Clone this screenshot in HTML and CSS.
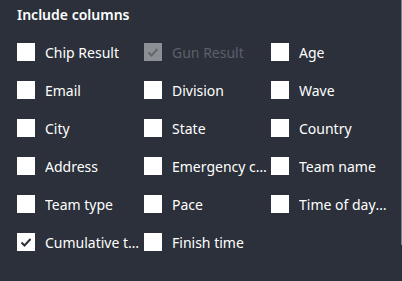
FILE: index.html
```html
<!DOCTYPE html>
<html lang="en">
<head>
    <meta charset="UTF-8">
    <title>Include columns</title>
    <link rel="stylesheet" href="styles.css">
</head>
<body>
    <div class="panel">
        <h2>Include columns</h2>
        <div class="columns">
            <label class="option"><span class="box"></span><span class="name">Chip Result</span></label>
            <label class="option disabled"><span class="box"><svg viewBox="0 0 18 18"><path d="M4.5 9.5 L7.5 12.5 L13.5 6"/></svg></span><span class="name">Gun Result</span></label>
            <label class="option"><span class="box"></span><span class="name">Age</span></label>

            <label class="option"><span class="box"></span><span class="name">Email</span></label>
            <label class="option"><span class="box"></span><span class="name">Division</span></label>
            <label class="option"><span class="box"></span><span class="name">Wave</span></label>

            <label class="option"><span class="box"></span><span class="name">City</span></label>
            <label class="option"><span class="box"></span><span class="name">State</span></label>
            <label class="option"><span class="box"></span><span class="name">Country</span></label>

            <label class="option"><span class="box"></span><span class="name">Address</span></label>
            <label class="option"><span class="box"></span><span class="name">Emergency contact</span></label>
            <label class="option"><span class="box"></span><span class="name">Team name</span></label>

            <label class="option"><span class="box"></span><span class="name">Team type</span></label>
            <label class="option"><span class="box"></span><span class="name">Pace</span></label>
            <label class="option"><span class="box"></span><span class="name short">Time of day finish</span></label>

            <label class="option checked"><span class="box"><svg viewBox="0 0 18 18"><path d="M4.5 9.5 L7.5 12.5 L13.5 6"/></svg></span><span class="name">Cumulative time</span></label>
            <label class="option"><span class="box"></span><span class="name">Finish time</span></label>
        </div>
        <div class="scroll-edge"></div>
    </div>
</body>
</html>
```

FILE: styles.css
```css
* {
    box-sizing: border-box;
}
body {
    margin: 0;
    background-color: #2b303a;
    font-family: 'Noto Sans', 'Open Sans', sans-serif;
    color: #ffffff;
}
.panel {
    position: relative;
    height: 281px;
    padding: 5px 17px 0;
}
h2 {
    margin: 0 0 18px;
    font-size: 14px;
    font-weight: 600;
    line-height: 20px;
}
.columns {
    display: grid;
    grid-template-columns: repeat(3, 127px);
    grid-auto-rows: 18px;
    row-gap: 20px;
}
.option {
    display: flex;
    align-items: center;
    gap: 10px;
    min-width: 0;
    font-size: 14px;
}
.box {
    flex: 0 0 18px;
    width: 18px;
    height: 18px;
    background-color: #ffffff;
}
.box svg {
    display: block;
    width: 18px;
    height: 18px;
}
.box path {
    fill: none;
    stroke: #2b303a;
    stroke-width: 2;
}
.name {
    max-width: 96px;
    white-space: nowrap;
    overflow: hidden;
    text-overflow: ellipsis;
}
.name.short {
    max-width: 89px;
}
.disabled .box {
    background-color: #8c8f94;
}
.disabled .box path {
    stroke: #64686e;
}
.disabled .name {
    color: #5b606a;
}
.scroll-edge {
    position: absolute;
    top: 0;
    right: 0;
    width: 1px;
    height: 245px;
    background-color: #7d838c;
}
```
